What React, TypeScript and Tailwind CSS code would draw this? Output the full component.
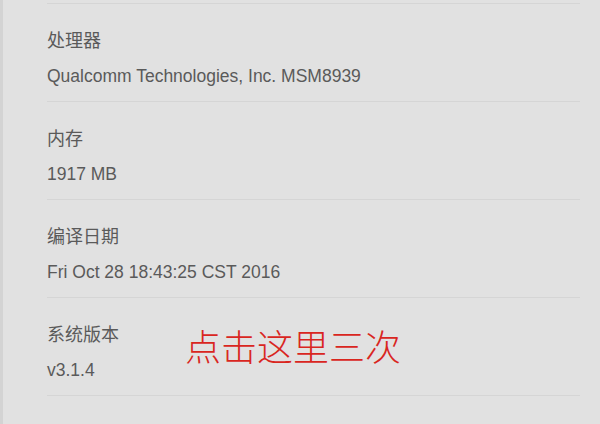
const rows = [
  ["处理器", "Qualcomm Technologies, Inc. MSM8939"],
  ["内存", "1917 MB"],
  ["编译日期", "Fri Oct 28 18:43:25 CST 2016"],
  ["系统版本", "v3.1.4"],
];

export default function App() {
  return (
    <div
      className="relative h-[424px] w-[600px] overflow-hidden border-l-[3px] border-[#d3d3d3] bg-[#e1e1e1] text-[#5a5a5a]"
      style={{ fontFamily: '"Liberation Sans", "Noto Sans CJK SC", sans-serif' }}
    >
      <div className="mt-[3px] ml-[44px] mr-[20px] border-t border-[#d5d5d5]">
        {rows.map(([k, v]) => (
          <div key={k} className="border-b border-[#d5d5d5] pt-[25px] pb-[13px]">
            <div className="text-[18px] leading-[24px]">{k}</div>
            <div className="mt-[12px] text-[17.5px] leading-[23px]">{v}</div>
          </div>
        ))}
      </div>
      <div className="absolute left-[182px] top-[329px] text-[36px] leading-[40px] font-light text-[#d9261f]">
        点击这里三次
      </div>
    </div>
  );
}
